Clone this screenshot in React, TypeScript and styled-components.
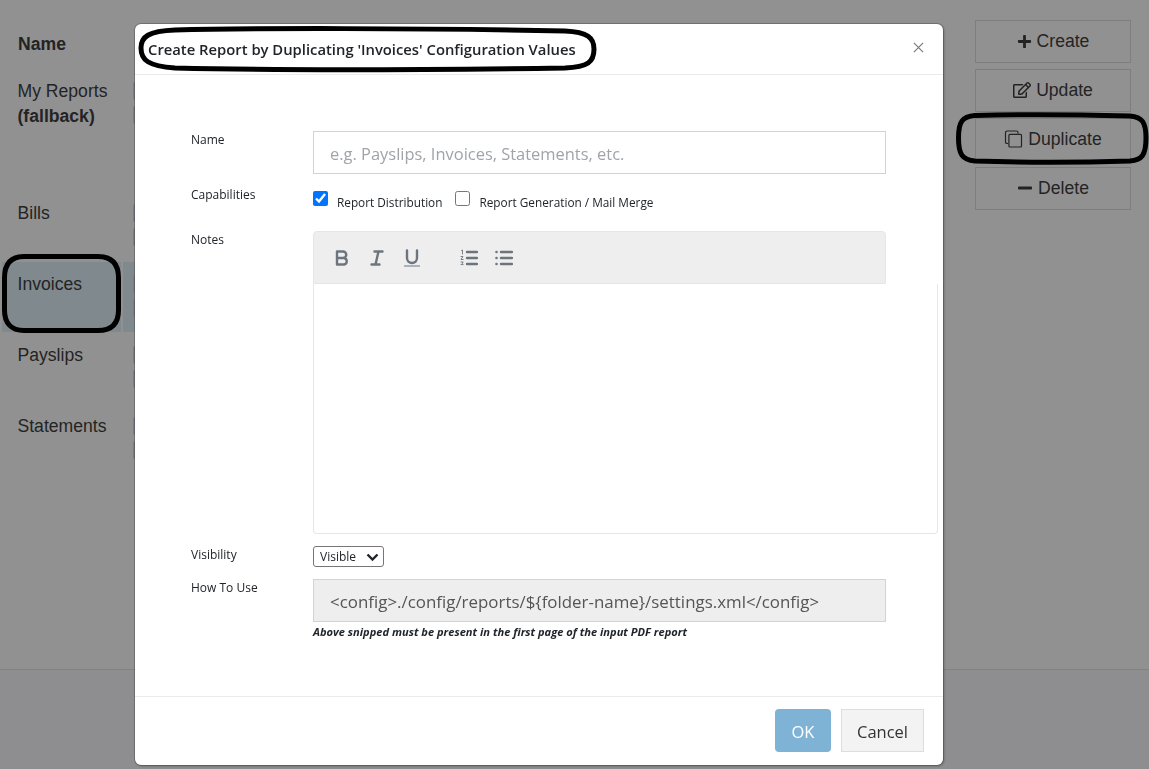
import { Fragment, type ReactNode } from "react";
import styled, { createGlobalStyle } from "styled-components";
import { FaMinus, FaPlus, FaRegEdit } from "react-icons/fa";

const GlobalStyle = createGlobalStyle`
  html, body {
    margin: 0;
    height: 100%;
    overflow: hidden;
    background: #fff;
    font-family: "Liberation Sans", Arial, sans-serif;
    color: #3f3f3f;
  }
  * { box-sizing: border-box; }
`;

const Page = styled.div`
  display: flex;
  flex-direction: column;
  height: 769px;
`;

const Main = styled.div`
  flex: 1;
  display: flex;
  justify-content: space-between;
  padding: 20px 18px 0 2px;
`;

const ReportTable = styled.div`
  display: grid;
  grid-template-columns: 119px 300px;
  grid-auto-rows: 70px;
  grid-template-rows: 48px 121px 70px;
  column-gap: 2px;
  row-gap: 1px;
  align-content: start;
  font-size: 17.6px;
  line-height: 25px;
`;

const Cell = styled.div<{ $selected?: boolean; $head?: boolean }>`
  padding: ${(p) => (p.$head ? "12px" : "10px")} 0 0 ${(p) => (p.$head ? "16px" : "15.5px")};
  background: ${(p) => (p.$selected ? "#dff1fa" : "transparent")};
  font-weight: ${(p) => (p.$head ? 700 : 400)};
`;

const TagCell = styled(Cell)`
  display: flex;
  flex-direction: column;
  gap: 6px;
  padding-left: 10px;
  padding-top: 13px;
`;

const Tag = styled.span`
  display: block;
  width: 120px;
  height: 18px;
  background: #dcdcea;
  border-radius: 2px;
`;

const Actions = styled.div`
  display: flex;
  flex-direction: column;
  gap: 6.4px;
  width: 156px;
`;

const ActionButton = styled.button`
  display: flex;
  align-items: center;
  justify-content: center;
  gap: 5px;
  height: 42.6px;
  background: #fff;
  border: 1px solid #ddd;
  color: #3f3f3f;
  font: 17.6px "Liberation Sans", Arial, sans-serif;
  padding: 0;
`;

const PageFooter = styled.footer`
  height: 100px;
  background: #f9fafe;
  border-top: 1px solid #e4e4e4;
`;

const Backdrop = styled.div`
  position: fixed;
  inset: 0;
  background: rgba(0, 0, 0, 0.43);
  padding: 24px 0 0 135px;
`;

const Modal = styled.div`
  display: flex;
  flex-direction: column;
  width: 808px;
  height: 741px;
  background: #fff;
  border-radius: 6px;
  box-shadow: 0 0 0 1px rgba(0, 0, 0, 0.2), 1px 1px 3px rgba(0, 0, 0, 0.3);
  font-family: "Open Sans", "Noto Sans", sans-serif;
  color: #212529;
`;

const ModalHeader = styled.div`
  display: flex;
  align-items: center;
  justify-content: space-between;
  height: 51px;
  padding: 0 19px 0 13px;
  border-bottom: 1px solid #e9ecef;
`;

const Title = styled.h5`
  margin: 0;
  font-size: 14.8px;
  font-weight: 600;
  color: #212529;
`;

const CloseButton = styled.button`
  display: flex;
  border: 0;
  background: none;
  padding: 0;
  margin-bottom: 4px;
  color: #7a7f84;
`;

const ModalBody = styled.div`
  flex: 1;
  display: flex;
  flex-direction: column;
  gap: 12px;
  padding: 56px 0 0 56px;
`;

const Row = styled.div<{ $height?: number }>`
  display: grid;
  grid-template-columns: 122px 1fr;
  min-height: ${(p) => p.$height ?? 0}px;
`;

const Label = styled.label`
  font-size: 12px;
  line-height: 17px;
  color: #212529;
`;

const TextInput = styled.input<{ $size?: number }>`
  display: block;
  width: 573px;
  height: 43px;
  padding: 1px 16px 0;
  border: 1px solid #ced4da;
  font: ${(p) => p.$size ?? 16.45}px "Open Sans", "Noto Sans", sans-serif;
  color: #495057;
  outline: none;
  &::placeholder { color: #a0a4a8; }
  &:read-only {
    background: #eee;
    color: #555;
  }
`;

const Checks = styled.div`
  display: flex;
  align-items: flex-start;
  gap: 13px;
  padding-top: 5px;
`;

const CheckLabel = styled.label`
  display: flex;
  align-items: flex-start;
  gap: 9px;
  font-size: 11.8px;
  line-height: 17px;
`;

const CheckBox = styled.input`
  width: 15px;
  height: 15px;
  margin: 0;
`;

const CheckText = styled.span`
  padding-top: 3px;
`;

const Toolbar = styled.div`
  display: flex;
  align-items: center;
  gap: 22px;
  width: 573px;
  height: 53px;
  padding: 0 10px;
  background: #eee;
  border: 1px solid #e4e6ea;
  border-radius: 4px 4px 0 0;
`;

const ToolGroup = styled.div`
  display: flex;
`;

const ToolButton = styled.button`
  display: flex;
  align-items: center;
  justify-content: center;
  width: 35px;
  height: 30px;
  padding: 0;
  border: 0;
  background: none;
  color: #6c757d;
`;

const Editor = styled.div`
  width: 625px;
  height: 250px;
  background: #fff;
  border: 1px solid #e4e6ea;
  border-top: 0;
  border-radius: 0 0 4px 4px;
`;

const SelectWrap = styled.div`
  position: relative;
  width: 71px;
  height: 21px;
`;

const VisibilitySelect = styled.select`
  display: block;
  appearance: none;
  width: 100%;
  height: 100%;
  padding: 0 0 0 6px;
  border: 1px solid #767676;
  border-radius: 3px;
  background: #fff;
  font: 12px "Open Sans", "Noto Sans", sans-serif;
  color: #212529;
`;

const SelectArrow = styled.svg`
  position: absolute;
  top: 7px;
  right: 5px;
  pointer-events: none;
`;

const HelpText = styled.small`
  display: block;
  margin-top: 3px;
  font-size: 11.1px;
  line-height: 13px;
  font-weight: 700;
  font-style: italic;
  color: #212529;
`;

const ModalFooter = styled.div`
  display: flex;
  justify-content: flex-end;
  gap: 10px;
  height: 69px;
  padding: 12px 19px 0 0;
  border-top: 1px solid #e9ecef;
`;

const OkButton = styled.button`
  width: 56px;
  height: 43px;
  padding: 1px 0 0;
  border: 0;
  border-radius: 4px;
  background: #7fb3d5;
  color: #fff;
  font: 16.5px "Open Sans", "Noto Sans", sans-serif;
`;

const CancelButton = styled.button`
  width: 83px;
  height: 43px;
  padding: 1px 0 0;
  border: 1px solid #ddd;
  background: #f3f3f3;
  color: #333;
  font: 16.5px "Open Sans", "Noto Sans", sans-serif;
`;

const Annotations = styled.svg`
  position: fixed;
  inset: 0;
  pointer-events: none;
`;

const rows = [
  { name: "My Reports", fallback: true },
  { name: "Bills" },
  { name: "Invoices", selected: true },
  { name: "Payslips" },
  { name: "Statements" },
];

function DuplicateIcon() {
  return (
    <svg width="19" height="18" viewBox="0 0 18 18" fill="none" stroke="currentColor" strokeWidth="1.2">
      <path d="M3.5 13.5H2.6A1.6 1.6 0 0 1 1 11.9V2.6A1.6 1.6 0 0 1 2.6 1h9.3a1.6 1.6 0 0 1 1.6 1.6v.9" />
      <rect x="4.4" y="4.4" width="12.6" height="12.6" rx="1" />
    </svg>
  );
}

function ToolIcon({ children }: { children: ReactNode }) {
  return (
    <svg width="18" height="18" viewBox="0 0 18 18" fill="none" stroke="currentColor" strokeWidth="2.4" strokeLinecap="round" strokeLinejoin="round">
      {children}
    </svg>
  );
}

export default function App() {
  return (
    <Page>
      <GlobalStyle />
      <Main>
        <ReportTable>
          <Cell $head>Name</Cell>
          <Cell $head>Capabilities</Cell>
          {rows.map((row) => (
            <Fragment key={row.name}>
              <Cell $selected={row.selected}>
                {row.name}
                {row.fallback && (
                  <>
                    <br />
                    <b>(fallback)</b>
                  </>
                )}
              </Cell>
              <TagCell $selected={row.selected}>
                <Tag />
                <Tag />
              </TagCell>
            </Fragment>
          ))}
        </ReportTable>
        <Actions>
          <ActionButton>
            <FaPlus size={15} /> Create
          </ActionButton>
          <ActionButton>
            <FaRegEdit size={18} /> Update
          </ActionButton>
          <ActionButton>
            <DuplicateIcon /> Duplicate
          </ActionButton>
          <ActionButton>
            <FaMinus size={16} /> Delete
          </ActionButton>
        </Actions>
      </Main>
      <PageFooter />

      <Backdrop>
        <Modal>
          <ModalHeader>
            <Title>Create Report by Duplicating 'Invoices' Configuration Values</Title>
            <CloseButton aria-label="Close">
              <svg width="11" height="11" viewBox="0 0 12 12" stroke="currentColor" strokeWidth="1.4">
                <path d="M1 1l10 10M11 1L1 11" />
              </svg>
            </CloseButton>
          </ModalHeader>
          <ModalBody>
            <Row>
              <Label>Name</Label>
              <TextInput placeholder="e.g. Payslips, Invoices, Statements, etc." />
            </Row>
            <Row $height={33}>
              <Label>Capabilities</Label>
              <Checks>
                <CheckLabel>
                  <CheckBox type="checkbox" defaultChecked />
                  <CheckText>Report Distribution</CheckText>
                </CheckLabel>
                <CheckLabel>
                  <CheckBox type="checkbox" />
                  <CheckText>Report Generation / Mail Merge</CheckText>
                </CheckLabel>
              </Checks>
            </Row>
            <Row>
              <Label>Notes</Label>
              <div>
                <Toolbar>
                  <ToolGroup>
                    <ToolButton aria-label="Bold">
                      <ToolIcon>
                        <path d="M4 2.5h6a3.2 3.2 0 0 1 0 6.5H4zM4 9h7a3.3 3.3 0 0 1 0 6.5H4z" />
                      </ToolIcon>
                    </ToolButton>
                    <ToolButton aria-label="Italic">
                      <ToolIcon>
                        <path d="M6.5 2.5h8M3.5 15.5h8M10.5 2.5l-3 13" />
                      </ToolIcon>
                    </ToolButton>
                    <ToolButton aria-label="Underline">
                      <ToolIcon>
                        <path d="M4 1.5v7.5a5 5 0 0 0 10 0V1.5" />
                        <path d="M1.5 17h15" strokeWidth="1.2" />
                      </ToolIcon>
                    </ToolButton>
                  </ToolGroup>
                  <ToolGroup>
                    <ToolButton aria-label="Ordered list">
                      <ToolIcon>
                        <path d="M7 3h10M7 9h10M7 15h10" />
                        <path d="M1.5 1.6l1-.6v4M1 7.5h2L1 10.5h2.2M1 13h2.2l-1 1.2 1 1.4H1" strokeWidth="0.9" />
                      </ToolIcon>
                    </ToolButton>
                    <ToolButton aria-label="Bullet list">
                      <ToolIcon>
                        <path d="M6 3h11M6 9h11M6 15h11" />
                        <path d="M1.5 3h.01M1.5 9h.01M1.5 15h.01" strokeWidth="2.6" />
                      </ToolIcon>
                    </ToolButton>
                  </ToolGroup>
                </Toolbar>
                <Editor />
              </div>
            </Row>
            <Row>
              <Label>Visibility</Label>
              <SelectWrap>
                <VisibilitySelect defaultValue="Visible">
                  <option>Visible</option>
                  <option>Hidden</option>
                </VisibilitySelect>
                <SelectArrow width="13" height="8" viewBox="0 0 13 8" fill="none" stroke="#212529" strokeWidth="2.4">
                  <path d="M1.5 1.5l5 5 5-5" />
                </SelectArrow>
              </SelectWrap>
            </Row>
            <Row>
              <Label>How To Use</Label>
              <div>
                <TextInput $size={16.9} readOnly value="<config>./config/reports/${folder-name}/settings.xml</config>" />
                <HelpText>Above snipped must be present in the first page of the input PDF report</HelpText>
              </div>
            </Row>
          </ModalBody>
          <ModalFooter>
            <OkButton>OK</OkButton>
            <CancelButton>Cancel</CancelButton>
          </ModalFooter>
        </Modal>
      </Backdrop>

      <Annotations width="1149" height="769" viewBox="0 0 1149 769" fill="none" stroke="#000" strokeWidth="5">
        <path d="M175 30C250 28 420 28 565 31C588 32 594 38 594 49C594 62 588 67 565 68C420 70 260 70 175 68C148 66 141 60 141 48C141 37 148 31 175 30Z" />
        <path d="M24 256.5H98C112 256.5 118.5 264 118.5 278V310C118.5 323 112 330.5 98 330.5H24C11 330.5 4.5 323 4.5 310V278C4.5 264 11 256.5 24 256.5Z" />
        <path d="M975 115.5C1030 114 1090 115 1130 116C1142 117 1146 122 1146 138C1146 155 1142 160 1130 161C1080 162.5 1020 162.5 975 161C962 160 958.5 154 958.5 138C958.5 122 962 116.5 975 115.5Z" />
      </Annotations>
    </Page>
  );
}
